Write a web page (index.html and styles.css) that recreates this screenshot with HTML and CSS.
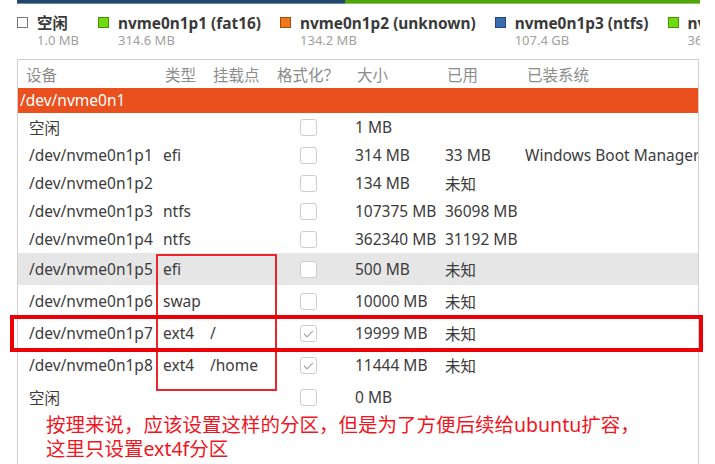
FILE: index.html
```html
<!DOCTYPE html>
<html lang="zh-CN">
<head>
    <meta charset="UTF-8">
    <title>分区</title>
    <link rel="stylesheet" href="styles.css">
</head>
<body>
    <div class="screen">
        <div class="usage-bar">
            <span class="seg seg-ntfs"></span>
            <span class="seg seg-free"></span>
        </div>

        <div class="legend">
            <div class="legend-item">
                <span class="swatch swatch-free"></span>
                <div class="legend-text">
                    <div class="legend-name">空闲</div>
                    <div class="legend-size">1.0 MB</div>
                </div>
            </div>
            <div class="legend-item">
                <span class="swatch swatch-green"></span>
                <div class="legend-text">
                    <div class="legend-name">nvme0n1p1 (fat16)</div>
                    <div class="legend-size">314.6 MB</div>
                </div>
            </div>
            <div class="legend-item">
                <span class="swatch swatch-orange"></span>
                <div class="legend-text">
                    <div class="legend-name">nvme0n1p2 (unknown)</div>
                    <div class="legend-size">134.2 MB</div>
                </div>
            </div>
            <div class="legend-item">
                <span class="swatch swatch-blue"></span>
                <div class="legend-text">
                    <div class="legend-name">nvme0n1p3 (ntfs)</div>
                    <div class="legend-size">107.4 GB</div>
                </div>
            </div>
            <div class="legend-item">
                <span class="swatch swatch-green"></span>
                <div class="legend-text">
                    <div class="legend-name">nvme0n1p4 (ntfs)</div>
                    <div class="legend-size">362.3 GB</div>
                </div>
            </div>
        </div>

        <div class="table">
            <div class="head">
                <span>设备</span>
                <span>类型</span>
                <span>挂载点</span>
                <span>格式化？</span>
                <span>大小</span>
                <span>已用</span>
                <span>已装系统</span>
            </div>
            <div class="disk">/dev/nvme0n1</div>

            <div class="row">
                <span>空闲</span><span></span><span></span>
                <span><i class="check"></i></span>
                <span>1 MB</span><span></span><span></span>
            </div>
            <div class="row">
                <span>/dev/nvme0n1p1</span><span>efi</span><span></span>
                <span><i class="check"></i></span>
                <span>314 MB</span><span>33 MB</span><span>Windows Boot Manager</span>
            </div>
            <div class="row">
                <span>/dev/nvme0n1p2</span><span></span><span></span>
                <span><i class="check"></i></span>
                <span>134 MB</span><span>未知</span><span></span>
            </div>
            <div class="row">
                <span>/dev/nvme0n1p3</span><span>ntfs</span><span></span>
                <span><i class="check"></i></span>
                <span>107375 MB</span><span>36098 MB</span><span></span>
            </div>
            <div class="row">
                <span>/dev/nvme0n1p4</span><span>ntfs</span><span></span>
                <span><i class="check"></i></span>
                <span>362340 MB</span><span>31192 MB</span><span></span>
            </div>
            <div class="row tall selected">
                <span>/dev/nvme0n1p5</span><span>efi</span><span></span>
                <span><i class="check"></i></span>
                <span>500 MB</span><span>未知</span><span></span>
            </div>
            <div class="row tall">
                <span>/dev/nvme0n1p6</span><span>swap</span><span></span>
                <span><i class="check"></i></span>
                <span>10000 MB</span><span>未知</span><span></span>
            </div>
            <div class="row tall">
                <span>/dev/nvme0n1p7</span><span>ext4</span><span>/</span>
                <span><i class="check checked"></i></span>
                <span>19999 MB</span><span>未知</span><span></span>
            </div>
            <div class="row tall">
                <span>/dev/nvme0n1p8</span><span>ext4</span><span>/home</span>
                <span><i class="check checked"></i></span>
                <span>11444 MB</span><span>未知</span><span></span>
            </div>
            <div class="row tall">
                <span>空闲</span><span></span><span></span>
                <span><i class="check"></i></span>
                <span>0 MB</span><span></span><span></span>
            </div>

            <p class="note">按理来说，应该设置这样的分区，但是为了方便后续给ubuntu扩容，<br>这里只设置ext4f分区</p>
        </div>

        <!-- annotation boxes drawn over the table -->
        <div class="mark mark-cols"></div>
        <div class="mark mark-row"></div>
    </div>
</body>
</html>
```

FILE: styles.css
```css
* {
    box-sizing: border-box;
}

body {
    margin: 0;
    background-color: #fff;
    color: #3c3c3c;
    font-family: "Noto Sans", "Noto Sans CJK SC", sans-serif;
}

.screen {
    position: relative;
    width: 715px;
    height: 464px;
    overflow: hidden;
}

.usage-bar {
    display: flex;
    height: 4px;
    margin-left: 17px;
    width: 683px;
}

.seg {
    display: block;
    height: 100%;
    border-bottom: 1px solid rgba(255, 255, 255, 0.35);
}

.seg-ntfs {
    width: 328px;
    background-color: #22486e;
}

.seg-free {
    flex: 1;
    background-color: #4fa50a;
}

.legend {
    display: flex;
    gap: 19px;
    margin-left: 17px;
    width: 683px;
    height: 55px;
    padding-top: 11px;
    overflow: hidden;
    white-space: nowrap;
}

.legend-item {
    flex: none;
    display: flex;
    align-items: flex-start;
    gap: 9px;
}

.swatch {
    flex: none;
    width: 11px;
    height: 11px;
    margin-top: 2px;
    border: 1px solid rgba(0, 0, 0, 0.35);
}

.swatch-free {
    background-color: #fff;
    border-color: #777;
}

.swatch-green {
    background-color: #6fdc10;
}

.swatch-orange {
    background-color: #f07818;
}

.swatch-blue {
    background-color: #3a6db0;
}

.legend-name {
    font-size: 15.4px;
    font-weight: bold;
    line-height: 18px;
    color: #3a3a3a;
}

.legend-size {
    font-size: 13px;
    line-height: 15px;
    color: #a0a0a0;
}

.table {
    margin-left: 17px;
    width: 682px;
    height: 420px;
    border: 1px solid #cfcfcf;
    border-bottom: none;
    font-size: 15.5px;
}

.head {
    display: grid;
    grid-template-columns: 139px 48px 64px 80px 90px 80px 1fr;
    align-items: center;
    height: 28px;
    padding-left: 8px;
    color: #8c8c8c;
}

.disk {
    height: 25px;
    line-height: 25px;
    padding-left: 2px;
    background-color: #e9501d;
    color: #fff;
}

.row {
    display: grid;
    grid-template-columns: 134px 47px 90px 55px 90px 80px 1fr;
    align-items: center;
    height: 28px;
    padding-left: 11px;
    white-space: nowrap;
    overflow: hidden;
}

.row.tall {
    height: 32px;
}

.row.selected {
    background-color: #e6e6e6;
}

.check {
    display: block;
    position: relative;
    width: 17px;
    height: 17px;
    border: 1px solid #cdcdcd;
    border-radius: 3px;
    background-color: #fff;
}

.check.checked::after {
    content: "";
    position: absolute;
    left: 5px;
    top: 2px;
    width: 4px;
    height: 8px;
    border: solid #9a9a9a;
    border-width: 0 1.5px 1.5px 0;
    transform: rotate(45deg);
}

.note {
    margin: 0;
    padding: 0 0 0 28px;
    font-size: 19.5px;
    line-height: 24px;
    color: #f0161f;
}

.mark {
    position: absolute;
}

.mark-cols {
    left: 156px;
    top: 254px;
    width: 121px;
    height: 137px;
    border: 2px solid #e8262c;
}

.mark-row {
    left: 10px;
    top: 315px;
    width: 693px;
    height: 37px;
    border: 4px solid #ec0008;
}
```
